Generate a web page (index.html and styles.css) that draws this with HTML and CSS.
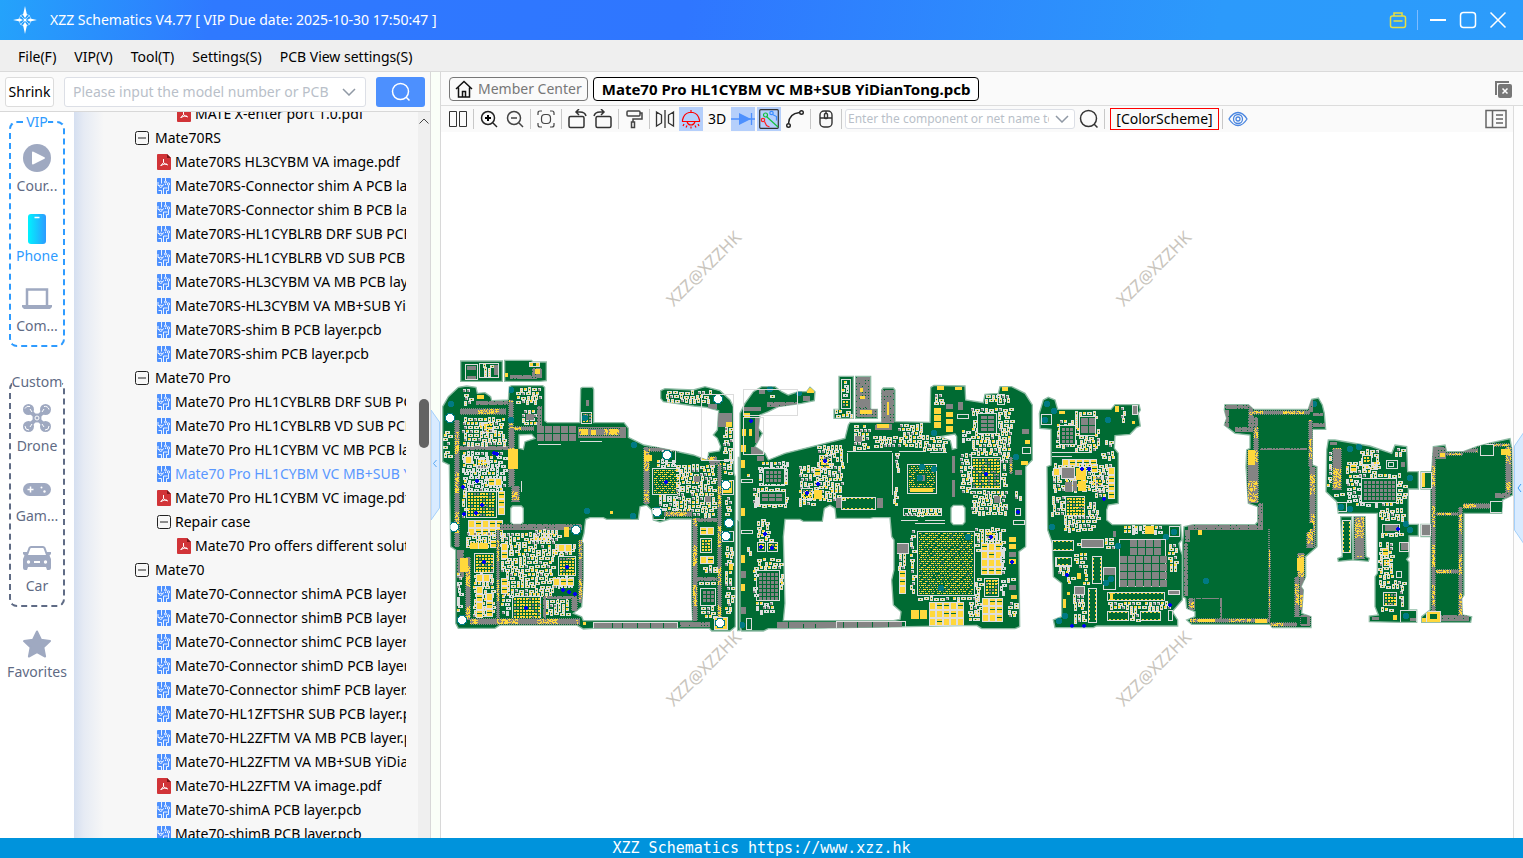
FILE: index.html
```html
<!DOCTYPE html>
<html lang="en">
<head>
    <meta charset="UTF-8">
    <meta name="viewport" content="width=device-width, initial-scale=1.0">
    <title>XZZ Schematics</title>
    <link rel="stylesheet" href="styles.css">
</head>
<body>
    <!-- shared icons -->
    <svg class="icon-defs" aria-hidden="true">
        <symbol id="i-pcb" viewBox="0 0 14 16">
            <rect width="14" height="16" rx="1" fill="#4d90fe"/>
            <g fill="none" stroke="#fff" stroke-width=".9">
                <path d="M4.500 0v5.500M1 4v3.500h1.500M5 8l2-1.500M4.500 16v-3.500H1.500M6.500 16V10h4M8.500 0v3M9.500 16v-3.500h2V7.500M8 6.500h1"/>
                <circle cx="3.700" cy="8.300" r="1.200"/><circle cx="11.500" cy="6" r="1.200"/><circle cx="8.500" cy="4" r="1"/>
            </g>
        </symbol>
        <symbol id="i-pdf" viewBox="0 0 14 16">
            <path d="M1 0h9l4 4v11a1 1 0 0 1-1 1H1a1 1 0 0 1-1-1V1a1 1 0 0 1 1-1z" fill="#d13438"/>
            <path d="M10 0l4 4h-4z" fill="#7d1518"/>
            <path d="M6.500 5v3.500L3.500 12M6.500 8.500q1.500 2 4.500 2.500M4 11.500q3-2 6-1.500" fill="none" stroke="#fff"/>
        </symbol>
        <symbol id="i-minus" viewBox="0 0 14 14">
            <rect x=".5" y=".5" width="13" height="13" rx="2" fill="none" stroke="#222"/>
            <path d="M3 7h8" stroke="#222"/>
        </symbol>
        <symbol id="i-down" viewBox="0 0 14 8">
            <path d="M1 1l6 6 6-6" fill="none" stroke="#9099a5" stroke-width="1.500"/>
        </symbol>
        <symbol id="i-search" viewBox="0 0 20 20">
            <circle cx="9.500" cy="9.500" r="8" fill="none" stroke="currentColor" stroke-width="1.500"/>
            <path d="M15 15l3.500 3.500" stroke="currentColor" stroke-width="1.500"/>
        </symbol>
    </svg>

    <header class="titlebar">
        <svg class="logo" viewBox="0 0 24 28">
            <g fill="none" stroke="#9fd6ff"><circle cx="12" cy="14" r="6"/><path d="M7 9l10 10M17 9L7 19"/></g>
            <path d="M12 0l2 9-2 3-2-3zM12 28l2-9-2-3-2 3zM0 14l7-1.500L10 14l-3 1.500zM24 14l-7-1.500L14 14l3 1.500z" fill="#fff"/>
            <circle cx="12" cy="14" r="1.500" fill="#fff"/>
        </svg>
        <h1 class="title">XZZ Schematics V4.77 [ VIP Due date: 2025-10-30 17:50:47 ]</h1>
        <div class="window-controls">
            <button class="win-btn" aria-label="Toolbox">
                <svg viewBox="0 0 18 18"><g fill="none" stroke="#e8e040" stroke-width="1.500"><rect x="1.500" y="5" width="15" height="11.500" rx="2"/><path d="M5 5V2h8v3M4.500 10h9"/></g></svg>
            </button>
            <span class="win-sep"></span>
            <button class="win-btn" aria-label="Minimize">
                <svg viewBox="0 0 18 18"><path d="M1 9h16" stroke="#fff" stroke-width="2"/></svg>
            </button>
            <button class="win-btn" aria-label="Maximize">
                <svg viewBox="0 0 18 18"><rect x="1.500" y="1.500" width="15" height="15" rx="3" fill="none" stroke="#fff" stroke-width="1.500"/></svg>
            </button>
            <button class="win-btn" aria-label="Close">
                <svg viewBox="0 0 18 18"><path d="M1.500 1.500l15 15M16.500 1.500l-15 15" stroke="#fff" stroke-width="1.500"/></svg>
            </button>
        </div>
    </header>

    <nav class="menubar">
        <button>File(F)</button>
        <button>VIP(V)</button>
        <button>Tool(T)</button>
        <button>Settings(S)</button>
        <button>PCB View settings(S)</button>
    </nav>

    <main class="main">
        <aside class="side">
            <div class="side-search">
                <button class="shrink">Shrink</button>
                <div class="combo">
                    <input type="text" placeholder="Please input the model number or PCB" aria-label="Model number or PCB">
                    <svg class="combo-arrow"><use href="#i-down"/></svg>
                </div>
                <button class="search-btn" aria-label="Search"><svg><use href="#i-search"/></svg></button>
            </div>

            <div class="side-body">
                <div class="rail">
                    <fieldset class="rail-group vip">
                        <legend>VIP</legend>
                        <button class="rail-item">
                            <svg viewBox="0 0 28 28"><circle cx="14" cy="14" r="14" fill="#9fa9c1"/><path d="M9 8.500a1 1 0 0 1 1.500-.8l11 5.500a1 1 0 0 1 0 1.600l-11 5.500a1 1 0 0 1-1.500-.8z" fill="#fff"/></svg>
                            <span>Cour...</span>
                        </button>
                        <button class="rail-item active">
                            <svg viewBox="0 0 28 28">
                                <defs><linearGradient id="phone-fill"><stop offset="0" stop-color="#00f2fe"/><stop offset="1" stop-color="#2d9bff"/></linearGradient></defs>
                                <rect x="5" width="18" height="30" rx="3" fill="url(#phone-fill)"/><path d="M11.500 3.500h5" stroke="#fff" stroke-width="1.500"/>
                            </svg>
                            <span>Phone</span>
                        </button>
                        <button class="rail-item">
                            <svg viewBox="0 0 28 28"><path d="M4 21V5.500h20V21" fill="none" stroke="#9fa9c1" stroke-width="2.500"/><path d="M-1 21h30v2l-2 2H1l-2-2z" fill="#9fa9c1"/></svg>
                            <span>Com...</span>
                        </button>
                    </fieldset>
                    <fieldset class="rail-group">
                        <legend>Custom</legend>
                        <button class="rail-item">
                            <svg viewBox="0 0 28 28">
                                <path d="M6 6l16 16M22 6L6 22" stroke="#9fa9c1" stroke-width="4"/>
                                <g fill="#9fa9c1"><circle cx="5.500" cy="5.500" r="5.500"/><circle cx="22.500" cy="5.500" r="5.500"/><circle cx="5.500" cy="22.500" r="5.500"/><circle cx="22.500" cy="22.500" r="5.500"/><circle cx="14" cy="14" r="4.500"/></g>
                                <g fill="none" stroke="#fff"><circle cx="14" cy="14" r="2"/><path d="M2 4.500a4 4 0 0 1 5-2M21 2.500a4 4 0 0 1 5 3M2 22a4 4 0 0 0 4 4M22 26a4 4 0 0 0 4-4M7 5l2 3M21 5l-2 3M7 23l2-3M21 23l-2-3"/></g>
                            </svg>
                            <span>Drone</span>
                        </button>
                        <button class="rail-item">
                            <svg viewBox="0 0 28 28"><rect y="9" width="28" height="13" rx="6.500" fill="#9fa9c1"/><path d="M4.500 15.500h6M7.500 12.500v6" stroke="#fff" stroke-width="1.500"/><circle cx="18.500" cy="13.500" r="1" fill="#fff"/><circle cx="21.500" cy="17.500" r="1.200" fill="#fff"/></svg>
                            <span>Gam...</span>
                        </button>
                        <button class="rail-item">
                            <svg viewBox="0 0 28 28"><path d="M4 11l2.500-7Q7 3 8 3h12q1 0 1.500 1L24 11" fill="none" stroke="#9fa9c1" stroke-width="2"/><path d="M0 8h4l1 3h18l1-3h4v2l-1.500 1.500L28 15v9a2 2 0 0 1-2 2h-2l-1-3H5l-1 3H2a2 2 0 0 1-2-2v-9l1.500-3.500L0 10z" fill="#9fa9c1"/><g fill="#fff"><circle cx="5.500" cy="18" r="1.700"/><rect x="11" y="17" width="6" height="2"/><circle cx="22.500" cy="18" r="1.700"/></g></svg>
                            <span>Car</span>
                        </button>
                    </fieldset>
                    <button class="rail-item favorites">
                        <svg viewBox="0 0 28 28"><path d="M14 1.500l4 8.300 9 1.300-6.600 6.300 1.700 9.100-8.100-4.300-8.100 4.300 1.700-9.100L1 11.100l9-1.300z" fill="#9fa9c1" stroke="#9fa9c1" stroke-width="2" stroke-linejoin="round"/></svg>
                        <span>Favorites</span>
                    </button>
                </div>

                <ul class="tree">
                    <li class="l3"><svg><use href="#i-pdf"/></svg><span>MATE X-enter port 1.0.pdf</span></li>
                    <li class="l1"><svg><use href="#i-minus"/></svg><span>Mate70RS</span></li>
                    <li class="l2"><svg><use href="#i-pdf"/></svg><span>Mate70RS HL3CYBM VA image.pdf</span></li>
                    <li class="l2"><svg><use href="#i-pcb"/></svg><span>Mate70RS-Connector shim A PCB layer.pcb</span></li>
                    <li class="l2"><svg><use href="#i-pcb"/></svg><span>Mate70RS-Connector shim B PCB layer.pcb</span></li>
                    <li class="l2"><svg><use href="#i-pcb"/></svg><span>Mate70RS-HL1CYBLRB DRF SUB PCB layer.pcb</span></li>
                    <li class="l2"><svg><use href="#i-pcb"/></svg><span>Mate70RS-HL1CYBLRB VD SUB PCB layer.pcb</span></li>
                    <li class="l2"><svg><use href="#i-pcb"/></svg><span>Mate70RS-HL3CYBM VA MB PCB layer.pcb</span></li>
                    <li class="l2"><svg><use href="#i-pcb"/></svg><span>Mate70RS-HL3CYBM VA MB+SUB YiDianTong.pcb</span></li>
                    <li class="l2"><svg><use href="#i-pcb"/></svg><span>Mate70RS-shim B PCB layer.pcb</span></li>
                    <li class="l2"><svg><use href="#i-pcb"/></svg><span>Mate70RS-shim PCB layer.pcb</span></li>
                    <li class="l1"><svg><use href="#i-minus"/></svg><span>Mate70 Pro</span></li>
                    <li class="l2"><svg><use href="#i-pcb"/></svg><span>Mate70 Pro HL1CYBLRB DRF SUB PCB layer.pcb</span></li>
                    <li class="l2"><svg><use href="#i-pcb"/></svg><span>Mate70 Pro HL1CYBLRB VD SUB PCB layer.pcb</span></li>
                    <li class="l2"><svg><use href="#i-pcb"/></svg><span>Mate70 Pro HL1CYBM VC MB PCB layer.pcb</span></li>
                    <li class="l2 selected"><svg><use href="#i-pcb"/></svg><span>Mate70 Pro HL1CYBM VC MB+SUB YiDianTong.pcb</span></li>
                    <li class="l2"><svg><use href="#i-pdf"/></svg><span>Mate70 Pro HL1CYBM VC image.pdf</span></li>
                    <li class="l2"><svg><use href="#i-minus"/></svg><span>Repair case</span></li>
                    <li class="l3"><svg><use href="#i-pdf"/></svg><span>Mate70 Pro offers different solutions.pdf</span></li>
                    <li class="l1"><svg><use href="#i-minus"/></svg><span>Mate70</span></li>
                    <li class="l2"><svg><use href="#i-pcb"/></svg><span>Mate70-Connector shimA PCB layer.pcb</span></li>
                    <li class="l2"><svg><use href="#i-pcb"/></svg><span>Mate70-Connector shimB PCB layer.pcb</span></li>
                    <li class="l2"><svg><use href="#i-pcb"/></svg><span>Mate70-Connector shimC PCB layer.pcb</span></li>
                    <li class="l2"><svg><use href="#i-pcb"/></svg><span>Mate70-Connector shimD PCB layer.pcb</span></li>
                    <li class="l2"><svg><use href="#i-pcb"/></svg><span>Mate70-Connector shimF PCB layer.pcb</span></li>
                    <li class="l2"><svg><use href="#i-pcb"/></svg><span>Mate70-HL1ZFTSHR SUB PCB layer.pcb</span></li>
                    <li class="l2"><svg><use href="#i-pcb"/></svg><span>Mate70-HL2ZFTM VA MB PCB layer.pcb</span></li>
                    <li class="l2"><svg><use href="#i-pcb"/></svg><span>Mate70-HL2ZFTM VA MB+SUB YiDianTong.pcb</span></li>
                    <li class="l2"><svg><use href="#i-pdf"/></svg><span>Mate70-HL2ZFTM VA image.pdf</span></li>
                    <li class="l2"><svg><use href="#i-pcb"/></svg><span>Mate70-shimA PCB layer.pcb</span></li>
                    <li class="l2"><svg><use href="#i-pcb"/></svg><span>Mate70-shimB PCB layer.pcb</span></li>
                </ul>

                <div class="scrollbar">
                    <svg class="scroll-up" viewBox="0 0 10 6"><path d="M.5 5.500L5 1l4.500 4.500" fill="none" stroke="#444"/></svg>
                    <div class="thumb"></div>
                </div>
            </div>
        </aside>

        <div class="splitter">
            <svg viewBox="0 0 9 110"><path d="M0 0l8.500 12v86L0 110z" fill="#d9ebff" stroke="#a3d0fb"/><path d="M5.500 50l-3 3.500 3 3.500" fill="none" stroke="#5aa9f5"/></svg>
        </div>

        <section class="work">
            <div class="tabs">
                <button class="tab">
                    <svg viewBox="0 0 18 18"><path d="M1 9l8-7.500L17 9M3.500 7.500V17h11V7.500M7.500 17v-5.500h3V17" fill="none" stroke="#111" stroke-width="1.500"/></svg>
                    Member Center
                </button>
                <button class="tab current">Mate70 Pro HL1CYBM VC MB+SUB YiDianTong.pcb</button>
                <button class="close-all" aria-label="Close all">
                    <svg viewBox="0 0 18 18"><path d="M1 15V1h14v2H3v12z" fill="#777"/><rect x="4" y="4" width="14" height="14" rx="2" fill="#777"/><path d="M8.500 8.500l5 5M13.500 8.500l-5 5" stroke="#fff" stroke-width="1.500"/></svg>
                </button>
            </div>

            <div class="toolbar">
                <button class="tool" aria-label="Split view"><svg viewBox="0 0 20 20"><path d="M1.500 2.500h7v15h-7zM11.500 2.500h7v15h-7z" fill="none" stroke="#333"/></svg></button>
                <span class="sep"></span>
                <button class="tool" aria-label="Zoom in"><svg viewBox="0 0 20 20"><g fill="none" stroke="#222" stroke-width="1.500"><circle cx="9" cy="9" r="6.500"/><path d="M14 14l4 4"/></g><path d="M6 9h6M9 6v6" stroke="#000" stroke-width="2"/></svg></button>
                <button class="tool" aria-label="Zoom out"><svg viewBox="0 0 20 20"><g fill="none" stroke="#444" stroke-width="1.500"><circle cx="9" cy="9" r="6.500"/><path d="M14 14l4 4M6 9h6"/></g></svg></button>
                <span class="sep"></span>
                <button class="tool" aria-label="Fit"><svg viewBox="0 0 20 20"><g fill="none" stroke="#444" stroke-width="1.200"><rect x="5.500" y="5.500" width="9" height="9" rx="3.500"/><path d="M2 6V4q0-2 2-2h2M14 2h2q2 0 2 2v2M18 14v2q0 2-2 2h-2M6 18H4q-2 0-2-2v-2"/></g></svg></button>
                <span class="sep"></span>
                <button class="tool" aria-label="Rotate left"><svg viewBox="0 0 20 20"><g fill="none" stroke="#333" stroke-width="1.500"><rect x="2" y="7.500" width="15" height="11" rx="1.500"/><path d="M9 3h4q5 0 6 4M12 0L9 3l3 3"/></g></svg></button>
                <button class="tool" aria-label="Rotate right"><svg viewBox="0 0 20 20"><g fill="none" stroke="#333" stroke-width="1.500"><rect x="3" y="7.500" width="15" height="11" rx="1.500"/><path d="M11 3H7Q2 3 1 7M8 0l3 3-3 3"/></g></svg></button>
                <span class="sep"></span>
                <button class="tool" aria-label="Paint"><svg viewBox="0 0 20 20"><g fill="none" stroke="#444" stroke-width="1.500"><rect x="3" y="2" width="13" height="5" rx="1"/><path d="M16 4h2v6h-9v3M7.500 13h3v5.500h-3z"/></g></svg></button>
                <span class="sep"></span>
                <button class="tool" aria-label="Mirror"><svg viewBox="0 0 20 20"><path d="M1.500 3l5 3v8l-5 3zM18.500 3l-5 3v8l5 3zM10 1v18" fill="none" stroke="#333" stroke-width="1.300"/></svg></button>
                <button class="tool on" aria-label="Lamp"><svg viewBox="0 0 20 20"><g fill="none" stroke="#f00" stroke-width="1.200"><path d="M1.500 12.500h17v-1.500Q17 4.500 12 3.500h-4Q3 4.500 1.500 11zM6 12.500q1 3.500 4 3.500t4-3.500M10 1v3M3 15l-1 2M6 16.500l-1 2M17 15l1 2M14 16.500l1 2M10 17.500v2"/></g></svg></button>
                <button class="tool">3D</button>
                <button class="tool on diode" aria-label="Diode"><svg viewBox="0 0 24 20"><path d="M0 10h24M20.500 4v12" stroke="#4d90fe" stroke-width="1.300"/><path d="M8 4l12 6-12 6z" fill="#4d90fe"/></svg></button>
                <button class="tool on" aria-label="Nets"><svg viewBox="0 0 20 20"><rect x=".7" y=".7" width="18.600" height="18.600" rx="1" fill="none" stroke="#333" stroke-width="1.200"/><g fill="none" stroke-width="1.200"><path d="M8 8l11 10" stroke="#13c03a"/><circle cx="6.500" cy="6" r="2" stroke="#13c03a"/><circle cx="12.500" cy="4" r="1.700" stroke="#3a8cff"/><path d="M13.500 5.500l4 2v4" stroke="#3a8cff"/><circle cx="4" cy="11" r="1.700" stroke="#f22"/><path d="M5.500 12.500l2 4 3 1.500" stroke="#f22"/></g></svg></button>
                <button class="tool" aria-label="Trace"><svg viewBox="0 0 20 20"><g fill="none" stroke="#222" stroke-width="1.400"><circle cx="3.500" cy="16.500" r="1.800"/><circle cx="16.500" cy="3.500" r="1.800"/><path d="M3.500 14.500Q4 4.500 14.500 3.500"/></g></svg></button>
                <span class="sep"></span>
                <button class="tool" aria-label="Mouse"><svg viewBox="0 0 20 20"><g fill="none" stroke="#333" stroke-width="1.400"><rect x="4" y="2" width="12" height="16" rx="4"/><path d="M4 9h12M10 2v2"/><rect x="8.500" y="4.500" width="3" height="5" rx="1"/></g></svg></button>
                <span class="sep"></span>
                <div class="combo small">
                    <input type="text" placeholder="Enter the component or net name to search" aria-label="Component or net name">
                    <svg class="combo-arrow"><use href="#i-down"/></svg>
                </div>
                <button class="tool find" aria-label="Find"><svg><use href="#i-search"/></svg></button>
                <span class="sep"></span>
                <button class="scheme">[ColorScheme]</button>
                <span class="sep"></span>
                <button class="tool" aria-label="Show"><svg viewBox="0 0 20 20"><g fill="none" stroke="#4a86e0" stroke-width="1.300"><path d="M1 10q4-6.500 9-6.500T19 10q-4 6.500-9 6.500T1 10z"/><circle cx="10" cy="10" r="4.500"/><circle cx="10" cy="10" r="2"/></g></svg></button>
                <button class="tool panel-toggle" aria-label="Side panel"><svg viewBox="0 0 22 20"><path d="M1 1.500h20v17H1zM7.500 1.500v17" fill="none" stroke="#666" stroke-width="1.500"/><path d="M11 6h7M11 10h7M11 14h7" stroke="#666" stroke-width="1.500"/></svg></button>
            </div>

            <div class="canvas-row">
                <svg class="board" id="board" viewBox="441 132 1072 706"></svg>
            </div>
        </section>

        <div class="right-strip">
            <svg viewBox="0 0 10 112"><path d="M10 0L.5 14v84L10 112z" fill="#d9ebff" stroke="#a3d0fb"/><path d="M7 52l-3 4 3 4" fill="none" stroke="#3d9cf5"/></svg>
        </div>
    </main>

    <footer class="statusbar">XZZ Schematics https://www.xzz.hk</footer>

    <script src="board.js"></script>
</body>
</html>
```
FILE: styles.css
```css
* {
    box-sizing: border-box;
}

body {
    margin: 0;
    height: 100vh;
    display: flex;
    flex-direction: column;
    overflow: hidden;
    font-family: "Noto Sans", "Open Sans", sans-serif;
    font-size: 14px;
    line-height: 20px;
    color: #000;
    background-color: #fff;
}

button,
input {
    font: inherit;
    color: inherit;
    margin: 0;
    padding: 0;
    border: none;
    background: none;
    white-space: nowrap;
}

svg {
    display: block;
    flex: none;
}

.icon-defs {
    position: absolute;
    width: 0;
    height: 0;
}

/* title bar */
.titlebar {
    flex: none;
    height: 40px;
    display: flex;
    align-items: center;
    padding: 0 16px 0 13px;
    color: #fff;
    background: linear-gradient(100deg, #24a3fb 0%, #2f79ff 14%, #2f76ff 45%, #2c9afb 80%, #2c9cfb 100%);
}

.logo {
    width: 24px;
    height: 28px;
}

.title {
    margin: 0 0 0 13px;
    font-size: 14px;
    font-weight: normal;
}

.window-controls {
    margin-left: auto;
    display: flex;
    align-items: center;
    gap: 12px;
}

.win-btn svg {
    width: 18px;
    height: 18px;
}

.win-sep {
    width: 1px;
    height: 20px;
    margin: 0 -1px 0 -2px;
    background-color: #7fbcff;
}

/* menu */
.menubar {
    flex: none;
    height: 32px;
    display: flex;
    align-items: center;
    gap: 18px;
    padding: 2px 0 0 18px;
    background-color: #efefef;
    border-bottom: 1px solid #dadada;
}

.main {
    flex: 1;
    min-height: 0;
    display: flex;
}

/* left panel */
.side {
    flex: none;
    width: 431px;
    display: flex;
    flex-direction: column;
    background-color: #fafafa;
    border-right: 1px solid #d8d8d8;
}

.side-search {
    flex: none;
    height: 40px;
    display: flex;
    align-items: center;
    padding: 0 5px;
    border-bottom: 1px solid #d8d8d8;
}

.shrink {
    width: 49px;
    height: 30px;
    margin-right: 10px;
    background-color: #fff;
    border: 1px solid #dcdcdc;
    border-radius: 3px;
}

.combo {
    display: flex;
    align-items: center;
    flex: 1;
    height: 30px;
    margin-right: 10px;
    padding: 0 9px 0 8px;
    background-color: #fff;
    border: 1px solid #dcdfe6;
    border-radius: 3px;
}

.combo input {
    flex: 1;
    min-width: 0;
    outline: none;
}

.combo input::placeholder {
    color: #b9bfc9;
    opacity: 1;
}

.combo-arrow {
    width: 14px;
    height: 8px;
    margin-left: 6px;
}

.search-btn {
    width: 49px;
    height: 30px;
    display: flex;
    align-items: center;
    justify-content: center;
    color: #fff;
    background-color: #4d90fe;
    border-radius: 3px;
}

.search-btn svg {
    width: 20px;
    height: 20px;
}

.side-body {
    flex: 1;
    min-height: 0;
    display: flex;
}

.rail {
    flex: none;
    width: 74px;
    display: flex;
    flex-direction: column;
    align-items: center;
    background-color: #fff;
    color: #5f6b85;
}

.rail-group {
    width: 56px;
    min-width: 0;
    margin: 0 0 25px;
    padding: 5px 0 0;
    border: 2px dashed #5f6b85;
    border-radius: 8px;
}

.rail-group.vip {
    border-color: #2e9bff;
}

.rail-group + .favorites {
    margin-top: -9px;
}

.rail-group legend {
    margin: 0 auto;
    padding: 0;
}

.vip legend,
.rail-item.active {
    color: #2e9bff;
}

.rail-item {
    width: 100%;
    height: 70px;
    padding: 7px 0 11px;
    display: flex;
    flex-direction: column;
    align-items: center;
    gap: 4px;
}

.rail-group .rail-item:last-child {
    height: 68px;
    padding-bottom: 9px;
}

.rail-item svg {
    width: 28px;
    height: 28px;
    overflow: visible;
}

/* file tree */
.tree {
    flex: 1;
    min-width: 0;
    margin: 0;
    padding: 0 12px 0 0;
    list-style: none;
    overflow: hidden;
    background: linear-gradient(90deg, #d5dff0 0, #e6ebf4 10px, #f7f7f7 30px);
}

.tree li {
    height: 24px;
    display: flex;
    align-items: center;
    overflow: hidden;
    white-space: nowrap;
}

.tree li:first-child {
    margin-top: -10px;
}

.tree svg {
    width: 14px;
    height: 16px;
    margin-right: 4px;
}

.tree .l1 {
    padding-left: 61px;
}

.tree .l1 svg {
    margin-right: 6px;
}

.tree .l2 {
    padding-left: 83px;
}

.tree .l3 {
    padding-left: 103px;
}

.tree .selected {
    color: #5a97ff;
}

.scrollbar {
    flex: none;
    width: 12px;
    padding: 6px 1px;
    background-color: #efefef;
}

.scroll-up {
    width: 10px;
    height: 6px;
}

.thumb {
    height: 49px;
    margin-top: 275px;
    border-radius: 5px;
    background-color: #636363;
}

.splitter {
    flex: none;
    width: 9px;
    padding-top: 20px;
    display: flex;
    align-items: center;
    background-color: #fafff8;
}

.splitter svg {
    width: 9px;
    height: 110px;
}

/* work area */
.work {
    flex: 1;
    min-width: 0;
    display: flex;
    flex-direction: column;
    border-left: 1px solid #d8d8d8;
}

.tabs {
    flex: none;
    height: 34px;
    margin-right: -10px;
    display: flex;
    align-items: center;
    gap: 5px;
    padding: 0 11px 0 8px;
    background-color: #fafafa;
    border-bottom: 1px solid #dcdcdc;
}

.tab {
    height: 24px;
    display: flex;
    align-items: center;
    gap: 5px;
    padding: 0 5px;
    color: #777;
    border: 1px solid #777;
    border-radius: 4px;
}

.tab svg {
    width: 18px;
    height: 18px;
}

.tab.current {
    padding: 0 8px;
    color: #000;
    font-size: 15px;
    font-weight: bold;
    background-color: #fff;
    border-color: #000;
}

.close-all {
    margin-left: auto;
}

.close-all svg {
    width: 18px;
    height: 18px;
}

.toolbar {
    flex: none;
    height: 26px;
    display: flex;
    align-items: center;
    gap: 2px;
    padding: 0 5px;
    background-color: #fafafa;
}

.tool {
    flex: none;
    width: 24px;
    height: 24px;
    display: flex;
    align-items: center;
    justify-content: center;
}

.tool svg {
    width: 20px;
    height: 20px;
}

.tool.on {
    background-color: #b5cffb;
}

.tool.diode svg {
    width: 24px;
}

.tool.find {
    color: #333;
}

.sep {
    flex: none;
    width: 1px;
    height: 20px;
    margin: 0 1px;
    background-color: #c8c8c8;
}

.combo.small {
    flex: none;
    width: 230px;
    height: 20px;
    margin: 0;
    padding: 0 5px 0 2px;
    font-size: 12px;
}

.scheme {
    width: 109px;
    height: 22px;
    margin-left: 2px;
    line-height: 20px;
    border: 1px solid #f00;
}

.panel-toggle {
    margin-left: auto;
}

.panel-toggle svg {
    width: 22px;
}

.canvas-row {
    flex: 1;
    min-height: 0;
}

.board {
    width: 100%;
    height: 100%;
}

.watermark {
    font-size: 17px;
    fill: #c9c5bd;
    text-anchor: middle;
}

.right-strip {
    flex: none;
    width: 10px;
    margin-top: 34px;
    padding-top: 326px;
    background-color: #fdfdfd;
    border-left: 1px solid #dcdcdc;
}

.right-strip svg {
    width: 10px;
    height: 112px;
}

.statusbar {
    flex: none;
    height: 20px;
    padding-top: 1px;
    line-height: 19px;
    text-align: center;
    font-family: "DejaVu Sans Mono", monospace;
    font-size: 15px;
    color: #fff;
    background-color: #0093dc;
}
```
FILE: board.js
```js
const NS = 'http://www.w3.org/2000/svg';
const svg = document.getElementById('board');

const GREEN = '#006b33';
const YELLOW = '#ffd83c';
const GREY = '#848484';
const WHITE = '#dedede';
const TEAL = '#007a84';
const BLUE = '#0000f0';

// small seeded generator so the board looks the same on every load
let seed = 7;
function rnd() {
    seed = (seed * 1103515245 + 12345) % 2147483648;
    return seed / 2147483648;
}

function add(parent, name, attrs) {
    const el = document.createElementNS(NS, name);
    for (const key in attrs) el.setAttribute(key, attrs[key]);
    parent.appendChild(el);
    return el;
}

// collects rectangles by colour, 3 board units = 1 pixel
function Layer() {
    this.d = {};
}
Layer.prototype.rect = function (c, x, y, w, h) {
    const s = v => Math.round(v / 3) * 3;
    this.d[c] = (this.d[c] || '') + `M${s(x)} ${s(y)}h${s(w)}v${s(h)}h${-s(w)}z`;
};
Layer.prototype.flush = function (g) {
    for (const c in this.d) add(g, 'path', { d: this.d[c], fill: c });
    this.d = {};
};

const draw = {
    // crowded small components
    p(L, x, y, w, h) {
        for (let j = y; j < y + h - 6; j += 12) {
            let i = x + 3 * Math.floor(rnd() * 3);
            while (i < x + w - 6) {
                const r = rnd();
                const k = rnd() < 0.5 ? 0 : 3;
                if (r < 0.3) {
                    // upright part with two pads
                    L.rect(WHITE, i, j - k, 9, 15);
                    L.rect(YELLOW, i + 3, j + 3 - k, 3, 3);
                    L.rect(YELLOW, i + 3, j + 9 - k, 3, 3);
                    if (k) L.rect(GREEN, i + 3, j + 3, 3, 3);
                    i += 12;
                } else if (r < 0.6) {
                    // lying part
                    L.rect(WHITE, i, j + k, 15, 9);
                    L.rect(YELLOW, i + 3, j + 3 + k, 3, 3);
                    L.rect(GREEN, i + 6, j + 3 + k, 3, 3);
                    L.rect(YELLOW, i + 9, j + 3 + k, 3, 3);
                    i += 18;
                } else if (r < 0.78) {
                    L.rect(YELLOW, i, j, 6, 6);
                    L.rect(WHITE, i, j + 6, 6, 3);
                    L.rect(WHITE, i + 6, j, 3, 9);
                    i += 12;
                } else if (r < 0.93) {
                    L.rect(WHITE, i, j, 9, 3);
                    L.rect(GREY, i, j + 3, 6, 6);
                    L.rect(WHITE, i + 6, j + 3, 3, 6);
                    i += 12;
                } else {
                    i += 9;
                }
            }
        }
    },
    // yellow capacitor pads in white frames
    y(L, x, y, w, h) {
        for (let j = y; j < y + h - 15; j += 24) {
            for (let i = x; i < x + w - 15; i += 21) {
                frame(L, i, j, 21, 24);
                L.rect(YELLOW, i + 3, j + 3, 15, 18);
                if (rnd() < 0.5) L.rect(GREEN, i + 3, j + 9, 15, 3);
            }
        }
    },
    // ball grid array, yellow pins
    b(L, x, y, w, h) {
        frame(L, x, y, w, h);
        for (let j = y + 6; j < y + h - 6; j += 9) {
            for (let i = x + 6; i < x + w - 6; i += 9) {
                L.rect(rnd() < 0.8 ? YELLOW : GREY, i, j, 6, 6);
                if (rnd() < 0.3) L.rect(YELLOW, i + 6, j, 3, 3);
            }
        }
    },
    // wide processor array with checked pins
    B(L, x, y, w, h) {
        frame(L, x, y, w, h);
        for (let j = y + 6; j < y + h - 6; j += 6) {
            for (let i = x + 6; i < x + w - 6; i += 6) {
                const r = rnd();
                L.rect(r < 0.62 ? YELLOW : r < 0.85 ? GREY : GREEN, i, j, 3, 3);
                if ((i / 6 + j / 6) % 3 < 1) L.rect(YELLOW, i + 3, j, 3, 3);
            }
        }
    },
    // grey pad array
    a(L, x, y, w, h) {
        frame(L, x, y, w, h);
        for (let j = y + 9; j < y + h - 9; j += 12) {
            for (let i = x + 9; i < x + w - 9; i += 12) L.rect(GREY, i, j, 9, 9);
        }
    },
    // large grey pads
    A(L, x, y, w, h) {
        for (let j = y; j < y + h - 12; j += 24) {
            for (let i = x; i < x + w - 12; i += 24) L.rect(GREY, i, j, 21, 21);
        }
    },
    // wide grey pads
    H(L, x, y, w, h) {
        for (let j = y; j < y + h - 6; j += 12) {
            for (let i = x; i < x + w - 12; i += 21) L.rect(GREY, i, j, 18, 9);
        }
    },
    // plain silk frame
    f(L, x, y, w, h) {
        frame(L, x, y, w, h);
    },
    // connector: frame with a row of pins on both long sides
    c(L, x, y, w, h) {
        frame(L, x, y, w, h);
        if (w > h) {
            for (let i = x + 6; i < x + w - 6; i += 12) {
                L.rect(YELLOW, i, y + 3, 6, 3);
                L.rect(YELLOW, i, y + h - 6, 6, 3);
            }
        } else {
            for (let j = y + 6; j < y + h - 6; j += 12) {
                L.rect(YELLOW, x + 3, j, 3, 6);
                L.rect(YELLOW, x + w - 6, j, 3, 6);
            }
        }
    },
    // grounded grey copper with vias and yellow spots
    r(L, x, y, w, h) {
        L.rect(GREY, x, y, w, h);
        const along = w > h;
        const len = along ? w : h;
        const wide = along ? h : w;
        for (let t = 0; t < len; t += 6) {
            // vias on both edges
            if (along) {
                L.rect(GREEN, x + t, y, 3, 3);
                L.rect(GREEN, x + t, y + h - 3, 3, 3);
            } else {
                L.rect(GREEN, x, y + t, 3, 3);
                L.rect(GREEN, x + w - 3, y + t, 3, 3);
            }
        }
        for (let t = 0; t < len - 6; t += 3) {
            if (Math.sin(t / 19 + x) < -0.1) continue;
            for (let k = 3; k < wide - 3; k += 3) {
                if (rnd() < 0.45) continue;
                if (along) L.rect(YELLOW, x + t, y + k, 3, 3);
                else L.rect(YELLOW, x + k, y + t, 3, 3);
            }
        }
    },
    // grey copper only
    R(L, x, y, w, h) {
        L.rect(GREY, x, y, w, h);
        for (let j = y; j < y + h; j += 9) {
            for (let i = x; i < x + w; i += 9) {
                if (rnd() < 0.45) L.rect(GREEN, i, j, 3, 3);
            }
        }
    },
    Y(L, x, y, w, h) { L.rect(YELLOW, x, y, w, h); },
    G(L, x, y, w, h) { L.rect(GREY, x, y, w, h); },
    N(L, x, y, w, h) { L.rect(GREEN, x, y, w, h); },
    W(L, x, y, w, h) { L.rect(WHITE, x, y, w, h); },
    // test point
    t(L, x, y) {
        L.rect(BLUE, x - 3, y - 6, 6, 12);
        L.rect(BLUE, x - 6, y - 3, 12, 6);
    },
    T(L, x, y) {
        L.rect(TEAL, x - 6, y - 9, 12, 18);
        L.rect(TEAL, x - 9, y - 6, 18, 12);
    },
    // screw hole
    o(L, x, y) {
        L.rect(TEAL, x - 9, y - 15, 18, 30);
        L.rect(TEAL, x - 15, y - 9, 30, 18);
        L.rect('#ffffff', x - 6, y - 12, 12, 24);
        L.rect('#ffffff', x - 9, y - 9, 18, 18);
        L.rect('#ffffff', x - 12, y - 6, 24, 12);
    }
};

function frame(L, x, y, w, h) {
    L.rect(WHITE, x, y, w, 3);
    L.rect(WHITE, x, y + h - 3, w, 3);
    L.rect(WHITE, x, y, 3, h);
    L.rect(WHITE, x + w - 3, y, 3, h);
}

const boards = [
    {
        at: [440, 350],
        outline: 'M8 170L25 140 55 112 80 108 108 112 112 130 135 128 152 140 155 152 205 150 208 110 215 107H308L314 112V212L322 218H420L422 115 427 112H458L461 118V218H552L565 235V262L612 285 680 298 760 315 800 330H803L806 308 838 303 842 290 832 265 820 255 832 240 836 182 800 172 762 168 670 155 662 145V122L675 116 760 120 795 110 840 122 870 150 880 170 882 370 886 380V830L870 843H815L808 835H460L430 837 410 825H180L165 835H55L47 820V600L32 590 28 345 8 335V250Z' +
            'M437 508L450 503H490L500 508H595L600 470 620 465 635 480 640 510 660 516 690 507H755V750L758 812H430L425 800 400 790 425 770 430 680V580L425 575 432 550Z' +
            'M218 468H244L250 475V516L244 523H218L212 516V475Z M237 255L275 253 285 265 255 275 250 298 237 295Z' +
            'M62 33H187V94H62Z M194 31H275L278 36H319V92L300 94H194Z M895 322h5v190h-5z M893 512h7v330h-7z',
        parts: [
            'f 75 42 39 48', 'G 81 48 27 12', 'G 81 78 27 9', 'f 117 39 60 45', 'p 126 42 33 36', 'G 162 45 12 30', 'f 267 36 33 15', 'Y 270 39 9 9', 'Y 288 39 9 9', 'R 210 75 84 12', 'R 276 54 30 30', 'Y 285 57 15 15', 'Y 195 69 9 12',
            'r 60 174 138 21', 'R 108 153 100 12', 'Y 110 135 21 12', 'r 42 210 18 380', 'R 60 288 144 12', 'r 204 150 18 80', 'r 204 230 21 180', 'Y 204 297 30 60', 'r 213 408 27 48',
            'r 222 228 60 15', 'p 66 117 30 48', 'p 228 114 78 48', 'p 246 180 45 48', 'G 258 192 24 18', 'T 34 162', 'T 214 210', 'T 214 120', 'o 29 205', 'R 290 168 15 60',
            'p 66 204 132 84', 'b 126 216 36 33', 'p 9 240 24 90', 'p 66 306 132 120', 'b 108 324 36 33', 'y 144 384 54 30', 'y 75 318 30 30', 't 162 309', 't 170 312', 't 68 411', 't 110 394',
            'p 66 423 15 84', 'b 78 423 93 81', 'y 174 423 36 76', 't 126 464', 't 107 488', 't 73 493', 'y 84 510 100 40', 'p 75 546 110 48', 'Y 90 579 24 18', 'Y 117 579 27 18', 'y 150 570 20 30', 'o 43 530',
            'G 438 150 9 18', 'b 423 186 33 36', 'T 436 205', 'A 291 228 120 48', 'G 414 232 144 33', 'r 417 234 126 24', 'Y 424 236 20 18', 'Y 452 240 14 15', 'Y 510 237 20 15', 'W 294 282 69 3', 'W 420 273 66 3', 'W 243 393 3 33', 'T 442 482', 'T 580 497', 'T 583 286', 'Y 510 483 9 9',
            'R 180 522 245 18', 'r 168 540 12 282', 'R 50 600 20 85', 'r 74 620 18 190', 'Y 60 624 24 42', 'b 102 609 60 60', 't 133 637', 'p 100 672 65 132', 'y 108 672 51 24', 'y 108 708 21 90', 'y 138 730 21 70',
            'p 183 550 160 190', 'p 280 540 80 40', 'p 340 582 70 40', 'y 354 582 54 30', 'b 354 618 54 60', 't 382 650', 'p 340 680 66 36', 'y 340 684 66 24', 'N 360 714 50 24', 't 370 719', 't 388 725', 't 406 731',
            'y 183 580 20 48', 'y 183 684 20 48', 'p 183 735 33 66', 'b 216 738 87 69', 't 257 773', 'p 318 750 70 48', 'R 309 738 9 66', 'R 320 738 90 10', 'r 393 745 20 39', 'r 90 804 330 21', 'r 415 570 15 190', 'o 409 541', 'o 67 811', 'Y 372 530 15 30', 'p 50 670 18 120',
            'r 609 290 21 170', 'r 625 290 190 15', 'Y 612 315 24 18', 'f 666 300 42 39', 'o 682 316', 'B 636 354 84 81', 't 679 397', 'p 708 345 120 156', 'p 650 435 66 48', 'G 762 378 18 18', 'G 795 438 18 18', 'p 650 330 60 24',
            'o 650 487', 'f 636 474 39 36', 'r 672 482 84 18', 'r 756 504 18 310', 'r 832 340 15 480', 'R 806 330 34 14', 'R 772 504 60 12', 'y 780 530 42 24', 'b 780 564 36 45', 'y 780 618 48 27', 'p 780 648 48 30', 'R 772 680 60 12',
            'p 774 696 54 18', 'a 780 714 48 54', 'p 780 770 48 36', 'p 850 230 30 150', 'p 855 440 24 60', 'p 855 590 27 210', 'f 846 390 36 45', 'Y 850 394 28 36', 'o 859 406', 'f 846 543 36 33', 'o 859 559', 'o 868 520', 'f 822 801 42 39', 'Y 825 804 36 33', 'o 841 820',
            'p 675 122 140 36', 'G 834 189 42 42', 'Y 858 216 18 15', 'o 834 148', 'G 804 162 27 15', 'f 460 815 254 20', 'G 463 818 248 14', 'N 515 818 3 14', 'N 545 818 3 14', 'N 590 818 3 14', 'N 630 818 3 14', 'N 670 818 3 14', 'R 720 815 90 14', 'r 780 318 50 15', 'Y 430 815 9 9', 'Y 867 642 12 18'
        ]
    },
    {
        at: [735, 350],
        outline: 'M15 190L30 160 55 125 80 110H120L140 125 160 135 190 125 215 125 225 112 240 125 238 152 200 160 130 170 100 185 75 195 70 235 82 250 60 290 90 310 100 330 150 310 330 265 340 225 345 217H440V120L445 114H475L480 120V215L585 217 587 112 597 106 690 108 692 150 745 158 750 133 790 130 795 110H830L870 130 892 165V330L872 350V590L852 605 854 830 840 836H740L725 826 520 830 140 836H100L85 843H20L15 830Z' +
            'M150 508H195L205 514H262L268 475 285 466 300 475 303 505H405L415 503H465L470 560 477 570V660L470 690 475 765 498 785 495 808 475 812H145L150 760 145 560Z' +
            'M655 466H683L690 474V516L683 524H655L648 516V474Z M615 260L660 252 665 260V295L652 298 646 272Z' +
            'M312 79H355V205H297V178H312Z M362 79H407V178H427V205H362Z',
        parts: [
            'f 318 87 30 91', 'p 321 93 24 50', 'b 318 147 30 30', 'p 300 180 54 24', 'R 363 81 42 120', 'Y 375 114 9 12', 'Y 375 138 15 9', 'R 375 174 50 28', 'Y 375 180 36 12',
            'R 437 120 39 100', 'R 420 222 50 18', 'Y 425 222 36 12', 'Y 456 155 6 40', 'p 350 226 60 48', 'p 352 276 60 21', 'p 415 258 70 42', 'p 488 222 80 78', 'p 560 258 80 50', 'G 360 258 20 18',
            'G 72 117 18 15', 'R 96 156 90 14', 'p 102 132 18 18', 'G 27 171 51 12', 'Y 27 190 18 15', 'G 60 205 12 75', 'Y 216 114 20 16', 'G 204 138 20 15', 'Y 21 237 12 21', 'Y 42 237 9 21', 'Y 18 285 15 21', 'Y 18 330 12 24', 't 49 214', 'G 48 290 36 21', 'G 66 318 21 15',
            'T 106 116', 'T 193 128',
            'p 66 336 96 78', 'N 84 354 66 48', 'a 84 354 66 54', 'p 54 414 108 66', 'N 72 423 81 42', 'H 81 432 66 30', 'f 72 423 81 42', 'W 60 440 12 30', 'p 36 360 12 30', 'f 18 387 36 12', 'Y 18 474 12 24',
            'p 192 348 60 126', 'p 246 288 84 168', 'b 252 315 39 42', 't 271 334', 't 250 403', 'b 198 415 36 36', 't 217 430', 'Y 237 420 24 27', 'y 237 354 24 24',
            'W 336 303 135 3', 'W 336 309 3 30', 'W 471 309 3 125', 'c 318 441 105 38', 'G 303 444 15 30', 'G 426 444 18 30', 'p 474 410 18 65', 'p 480 306 15 55',
            'W 492 303 80 3', 'W 585 306 51 3', 'B 516 342 90 90', 'N 540 370 36 30', 'G 546 376 24 18', 'T 555 385', 'T 560 352', 'T 598 356', 'Y 525 415 70 12', 'f 504 474 116 24', 'p 507 477 111 24', 'W 498 510 50 3', 'W 570 510 60 3', 'W 540 519 90 3',
            'Y 606 108 20 12', 'p 594 132 36 36', 'Y 597 174 21 18', 'Y 597 195 21 18', 'Y 597 216 21 18', 'Y 633 186 21 14', 'Y 633 207 21 14', 'Y 633 228 21 18', 'Y 660 110 20 9', 'G 669 156 15 24', 'f 666 192 36 15', 'G 633 162 20 15',
            'p 708 174 126 144', 'N 729 192 60 57', 'f 726 189 60 63', 'H 738 198 45 45', 'p 750 135 80 30', 'f 786 132 24 33', 'Y 801 111 18 12', 'G 861 236 22 15', 'Y 870 270 15 12', 'f 861 291 27 21', 'Y 858 333 21 12', 'p 675 312 39 123', 'b 708 321 90 96', 't 754 371', 'p 798 318 24 100', 'r 822 320 12 50', 'p 708 423 110 78', 'G 777 438 18 20', 'G 840 360 20 15', 'p 833 425 30 27', 'f 840 474 18 24', 't 850 485', 'f 834 510 36 15', 'T 598 249', 'T 843 322', 'G 651 318 9 51', 'G 651 390 9 51', 'p 675 240 30 36',
            'B 546 543 174 195', 'p 526 540 18 198', 'f 486 579 36 33', 'G 486 582 33 27', 'p 486 612 36 50', 'y 492 660 33 80', 'T 618 715', 'T 700 560', 'p 720 534 90 70', 'b 750 543 36 30', 't 769 560', 'y 738 579 66 102', 'b 747 684 45 57', 'p 720 684 24 130', 'p 795 580 15 160', 'y 740 744 66 72', 'y 582 756 120 66', 'p 546 741 190 18', 'p 700 756 36 60', 'Y 528 780 24 27', 'Y 556 780 20 27', 'Y 822 561 21 14', 'Y 822 582 21 14', 'G 822 606 21 14', 'Y 822 627 21 14', 't 832 637', 'p 816 684 30 14', 'G 822 705 21 15', 'Y 828 735 18 12', 'p 819 756 33 48',
            'p 66 504 45 72', 't 91 553', 'b 66 577 27 30', 't 79 590', 'b 96 577 33 30', 't 112 593', 'f 18 541 36 12', 'p 54 624 90 36', 'a 63 660 72 93', 'p 54 660 12 90', 'p 135 660 12 90', 'p 60 756 60 42', 'Y 18 615 12 24', 'G 18 663 15 21', 'Y 18 702 12 21', 'G 18 771 15 21', 'f 33 804 18 36', 'T 22 826',
            'G 125 815 375 18', 'f 303 812 209 24', 'N 160 815 3 18', 'N 205 821 3 12', 'N 240 821 3 12', 'N 324 815 3 18', 'N 366 815 3 18', 'N 410 815 3 18', 'N 460 815 3 18', 'p 36 590 18 20'
        ]
    },
    {
        at: [1035, 390],
        outline: 'M13 70L25 30 40 22 60 30 68 58H228L240 44H312L316 60 310 70 316 108 305 112 285 133 240 137 238 175 250 190V340L220 345 215 360V390L232 404H437L440 450 432 460 435 478 442 495V630L425 650 412 665 428 690V708H185L175 713H60L55 690 80 680V580L55 560 52 460 38 420 36 230 48 225V118L15 115Z' +
            'M447 410L475 404H660L668 395V350L640 340 633 230 635 180 645 175V135L600 130 568 105 575 85 568 60 570 44H640L655 58H820L830 28 850 24 862 45 868 70 872 118H832V225L846 230V470L812 500V560L798 590 805 600 800 670 828 680V713H712L705 703H470L455 690 480 680V665L455 655 452 625 443 620V460Z',
        parts: [
            'T 37 43', 'T 56 62', 'f 18 72 33 33', 'T 31 89', 'Y 72 63 18 9', 'p 60 90 66 90', 'N 72 105 51 60', 'a 72 105 51 60', 'p 120 66 66 120', 'N 135 81 48 54', 'A 138 84 40 50', 'f 132 78 51 60', 'T 220 91', 'p 180 120 16 60', 'p 258 50 20 54', 'f 291 45 18 30', 'G 294 48 12 24', 'Y 240 48 12 18', 'Y 291 93 9 9', 'W 51 186 120 3', 'W 51 198 60 3', 'p 210 150 24 27', 'p 195 186 44 30',
            'y 80 208 120 20', 'p 50 222 180 80', 'f 78 231 42 36', 'G 81 234 36 30', 'Y 122 234 30 36', 'G 90 276 20 30', 'y 168 225 30 24', 'G 114 273 12 30', 'Y 128 273 24 30', 'b 168 255 36 36', 'y 219 230 18 90', 'y 54 234 24 36', 'p 180 300 36 30', 't 142 236', 't 162 238', 't 208 328',
            'p 48 318 40 66', 'b 90 318 60 60', 'p 156 336 36 50', 'p 84 378 108 54', 'T 52 412', 'c 51 450 66 33', 'f 138 447 69 27', 'G 141 450 63 21', 'p 120 455 18 18', 'p 210 445 30 42',
            'p 268 407 36 30', 'p 300 407 80 30', 'Y 330 408 27 24', 'f 402 408 33 33', 'T 418 425', 'T 392 440', 'f 252 447 140 144', 'A 285 450 105 48', 'A 255 498 135 92', 'p 399 462 30 90', 'G 234 423 9 18',
            'f 60 500 51 30', 'c 63 501 48 27', 'p 66 530 40 24', 'p 117 490 42 50', 'c 171 498 30 84', 't 97 556', 'Y 126 549 12 18', 'G 204 531 39 24', 'f 204 531 39 70', 'T 212 578', 'T 228 566', 'T 248 468', 'p 144 540 21 60', 'p 96 560 20 24', 'G 120 590 27 22', 'f 117 588 33 27',
            'c 216 606 174 27', 'Y 225 609 9 21', 'c 159 594 27 104', 'p 216 636 190 24', 'c 216 663 66 30', 'p 285 660 30 36', 'c 315 663 63 30', 'p 114 615 42 88', 'f 399 600 36 15', 'G 402 603 30 9', 't 406 644', 'Y 84 627 9 27', 'Y 96 607 9 9', 't 112 707', 't 148 707', 'T 73 693', 'T 90 678', 'f 399 660 15 33',
            'R 570 45 80 12', 'R 570 60 12 50', 'R 600 110 60 15', 'r 640 50 18 30', 'R 640 80 30 30', 'r 655 60 170 15', 'r 820 90 15 140', 'r 655 110 18 80', 'r 636 180 36 160', 'Y 639 180 21 45', 'R 675 174 140 6', 'T 838 42', 'R 820 30 14 36', 'R 835 70 30 10', 'R 835 100 36 12', 'r 822 230 21 240', 'R 668 340 15 70', 'R 460 405 225 15', 'R 450 420 15 36', 'Y 489 420 12 15', 'R 446 460 12 160', 'r 700 415 6 70', 'r 698 480 9 205', 'r 458 625 20 36', 'r 465 685 240 15', 'R 480 624 78 4', 'R 555 624 5 70', 'Y 490 687 50 10', 'Y 660 687 36 12', 'r 705 696 80 15', 'r 785 490 24 170', 'Y 787 505 21 40', 'r 778 560 18 120', 'r 812 425 24 48', 'r 795 676 33 33', 'T 512 574', 'N 798 682 18 21', 'N 815 400 18 18'
        ]
    },
    {
        at: [1310, 420],
        outline: 'M55 60H75L180 78 245 100 255 75 290 80 293 155H325V207H295V313H325V348H297V410L290 418 297 426V570H320V607H270L178 605V588L205 585 195 560V470L202 460V280H85L80 245 48 215 50 90Z' +
            'M92 290H125L128 420 85 424 83 415 97 410Z M132 290H165L168 410 178 415 175 424 130 420Z' +
            'M370 80L405 75 410 95H460L500 80 545 68 600 56 605 85 608 225 578 240 575 280H462V525L455 535 457 585 485 590 482 607H335V590L360 570 362 350H333V313H362V207H333V155H365Z',
        parts: [
            'G 60 66 21 9', 'p 51 96 15 108', 'r 66 84 30 126', 'T 121 88', 'T 146 80', 'p 108 126 100 36', 'y 120 132 27 21', 'b 156 105 30 30', 'p 150 90 66 66', 'N 160 108 24 24', 'b 156 105 30 30', 'f 228 120 36 27', 'f 234 126 18 15', 'p 252 84 30 24', 'G 273 126 12 15', 'p 108 165 48 90', 'p 126 162 150 18', 'p 258 180 30 70', 'N 156 177 102 69', 'a 153 174 108 75', 'p 138 249 120 18', 'p 72 220 30 14', 'T 94 262', 'f 78 246 33 30', 'T 120 266', 'T 301 175', 'p 207 267 80 36',
            'f 216 312 54 30', 'G 225 315 40 18', 'p 207 340 70 18', 't 265 326', 'T 288 311', 'T 301 329', 'p 204 370 48 104', 'y 216 384 27 24', 'b 216 414 24 30', 'f 267 366 30 30', 'G 273 369 21 21', 'f 258 453 18 21', 'p 204 483 84 30', 'b 219 516 42 42', 'p 267 500 20 60', 'p 213 564 48 18', 'f 270 570 51 39', 'T 287 589', 'G 186 591 21 9', 'Y 249 585 12 15', 'G 300 595 18 9',
            'c 97 300 27 98', 'r 132 292 33 125',
            'R 366 80 42 36', 'Y 391 98 15 12', 'r 408 96 50 12', 'r 450 84 55 15', 'r 500 70 100 12', 'r 585 80 21 140', 'Y 573 87 27 18', 'N 510 72 42 36', 'f 510 72 42 36', 'r 460 250 80 18', 'R 555 220 45 15', 'N 540 243 39 36', 'f 540 243 39 36', 'r 363 110 15 480', 'r 378 275 76 12', 'r 445 262 15 330', 'r 378 446 70 15', 'f 333 156 32 50', 'Y 336 160 9 42', 'f 333 313 30 36', 'G 336 316 24 30', 'R 378 585 100 18', 'f 348 572 45 36', 'Y 351 575 39 30', 'N 360 582 21 15', 'Y 336 593 12 12'
        ]
    }
];

function drawBoards() {
    [[703, 268], [1153, 268], [703, 668], [1153, 668]].forEach(([x, y]) => {
        const t = add(svg, 'text', { class: 'watermark', transform: `translate(${x + 5} ${y + 5}) rotate(-45)` });
        t.textContent = 'XZZ@XZZHK';
    });
    boards.forEach((b, n) => {
        const g = add(svg, 'g', { transform: `translate(${b.at[0]} ${b.at[1]}) scale(${1 / 3})` });
        const clip = add(g, 'clipPath', { id: 'clip' + n });
        add(clip, 'path', { d: b.outline, 'clip-rule': 'evenodd' });
        add(g, 'path', { d: b.outline, fill: GREEN, 'fill-rule': 'evenodd', stroke: '#8fbca5', 'stroke-width': 4 });
        const inner = add(g, 'g', { 'clip-path': `url(#clip${n})`, 'shape-rendering': 'crispEdges' });
        b.parts.forEach(line => {
            const [type, ...v] = line.split(' ');
            const L = new Layer();
            draw[type](L, ...v.map(Number));
            L.flush(inner);
        });
    });

    // silk frames that reach past the board edge
    const lines = add(svg, 'g', { fill: 'none', stroke: '#dcdcdc', 'shape-rendering': 'crispEdges' });
    add(lines, 'rect', { x: 701.5, y: 394.5, width: 32, height: 66 });
    add(lines, 'rect', { x: 743.5, y: 389.5, width: 54, height: 26 });
    add(lines, 'rect', { x: 743.5, y: 417.5, width: 20, height: 37 });
}

drawBoards();
```
